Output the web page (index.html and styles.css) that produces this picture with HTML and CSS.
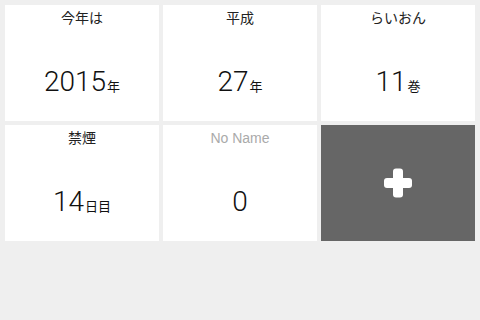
FILE: index.html
```html
<!DOCTYPE html>
<html lang="ja">
<head>
    <meta charset="UTF-8">
    <meta name="viewport" content="width=device-width, initial-scale=1.0">
    <title>カウンター</title>
    <link rel="stylesheet" href="styles.css">
</head>
<body>

    <div class="grid">
        <div class="tile">
            <p class="title">今年は</p>
            <p class="count">2015<span class="unit">年</span></p>
        </div>
        <div class="tile">
            <p class="title">平成</p>
            <p class="count">27<span class="unit">年</span></p>
        </div>
        <div class="tile">
            <p class="title">らいおん</p>
            <p class="count">11<span class="unit">巻</span></p>
        </div>
        <div class="tile">
            <p class="title">禁煙</p>
            <p class="count">14<span class="unit">日目</span></p>
        </div>
        <div class="tile">
            <p class="title empty">No Name</p>
            <p class="count">0</p>
        </div>
        <div class="tile add">
            <svg width="30" height="30" viewBox="0 0 30 30">
                <rect x="10" y="0.5" width="10" height="29" rx="3" fill="#fff"/>
                <rect x="1" y="10" width="28" height="10" rx="3" fill="#fff"/>
            </svg>
        </div>
    </div>

</body>
</html>
```

FILE: styles.css
```css
body {
    margin: 0;
    background-color: #efefef;
    font-family: 'Liberation Sans', 'Noto Sans CJK JP', sans-serif;
    color: #222;
}
.grid {
    display: grid;
    grid-template-columns: repeat(3, 154px);
    grid-auto-rows: 116px;
    gap: 4px;
    padding: 5px;
}
.tile {
    background: #fff;
    display: flex;
    flex-direction: column;
    align-items: center;
}
.title {
    margin: 0;
    padding-top: 5px;
    font-size: 14px;
    line-height: 16px;
}
.title.empty {
    color: #aaa;
}
.count {
    margin: 0;
    margin-top: 40px;
    font-family: 'Roboto', 'Liberation Sans', sans-serif;
    font-weight: 300;
    font-size: 28px;
    line-height: 32px;
    color: #111;
}
.unit {
    font-family: 'Noto Sans CJK JP', sans-serif;
    font-weight: 400;
    font-size: 13px;
    margin-left: 1px;
}
.tile.add {
    background: #666;
    justify-content: center;
}
```
